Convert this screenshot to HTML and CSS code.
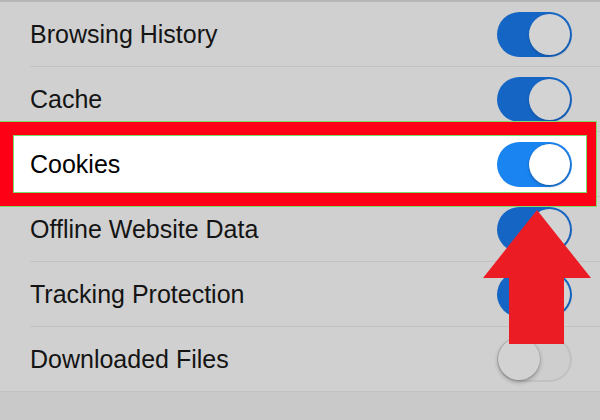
FILE: index.html
```html
<!DOCTYPE html>
<html lang="en">
<head>
<meta charset="utf-8">
<title>Clear Data</title>
<link rel="stylesheet" href="styles.css">
</head>
<body>
<div class="screen">
  <div class="topline"></div>
  <ul class="list">
    <li class="row"><span class="label">Browsing History</span><span class="toggle on dim"><span class="knob"></span></span></li>
    <li class="row"><span class="label">Cache</span><span class="toggle on dim"><span class="knob"></span></span></li>
    <li class="row highlighted"><span class="label">Cookies</span><span class="toggle on"><span class="knob"></span></span></li>
    <li class="row"><span class="label">Offline Website Data</span><span class="toggle on dim"><span class="knob"></span></span></li>
    <li class="row"><span class="label">Tracking Protection</span><span class="toggle on dim"><span class="knob"></span></span></li>
    <li class="row last"><span class="label">Downloaded Files</span><span class="toggle off"><span class="knob"></span></span></li>
  </ul>
  <div class="frame"></div>
  <svg class="arrow" width="600" height="420" viewBox="0 0 600 420" aria-hidden="true">
    <polygon points="537,210 591,278 564,278 564,344 509,344 509,278 483,278" fill="#ec1c24"/>
  </svg>
</div>
</body>
</html>
```

FILE: styles.css
```css
* { box-sizing: border-box; }
html, body {
  margin: 0;
  padding: 0;
  background: #c9c9c9;
}
.screen {
  position: relative;
  width: 600px;
  height: 420px;
  overflow: hidden;
  background: #c9c9c9;
  font-family: "Liberation Sans", Arial, sans-serif;
}
.topline {
  height: 2px;
  background: #b6b6b6;
}
.list {
  list-style: none;
  margin: 0;
  padding: 0;
  background: #d0d0d0;
}
.row {
  display: flex;
  align-items: center;
  justify-content: space-between;
  height: 65px;
  padding: 0 28px 1px 30px;
  background-image: linear-gradient(#c2c2c2, #c2c2c2);
  background-size: calc(100% - 30px) 1px;
  background-position: 30px 100%;
  background-repeat: no-repeat;
}
.row.last {
  background-size: 100% 1px;
  background-position: 0 100%;
}
.label {
  font-size: 25px;
  color: #141414;
  line-height: 1;
}
.highlighted .label,
.highlighted .toggle {
  position: relative;
  z-index: 2;
}
.highlighted .label { color: #000; }

.toggle {
  position: relative;
  display: block;
  width: 75px;
  height: 45px;
  border-radius: 23px;
  flex: none;
}
.toggle .knob {
  position: absolute;
  top: 2px;
  width: 41px;
  height: 41px;
  border-radius: 50%;
}
.toggle.on { background: #1a84f2; }
.toggle.on .knob {
  right: 2px;
  background: #ffffff;
  box-shadow: 0 2px 3px rgba(0, 0, 0, 0.18);
}
.toggle.on.dim { background: #1565c4; }
.toggle.on.dim .knob {
  background: #d3d3d3;
  box-shadow: 0 2px 3px rgba(0, 0, 0, 0.15);
}
.highlighted .toggle.on { background: #1a84f0; }
.highlighted .toggle.on .knob { box-shadow: 0 2px 3px rgba(0, 0, 0, 0.2), 0 0 0 0.5px #1a6cc8; }
.toggle.off {
  background: #cecece;
  box-shadow: inset 0 0 0 2px #c1c1c1;
}
.toggle.off .knob {
  left: 1px;
  top: 1px;
  width: 42px;
  height: 42px;
  background: #d2d2d2;
  box-shadow: 0 2px 4px rgba(0, 0, 0, 0.3), 0 0 0 0.5px rgba(0, 0, 0, 0.12);
}

.frame {
  position: absolute;
  z-index: 1;
  left: 0;
  top: 122px;
  width: 596px;
  height: 84px;
  background: #ffffff;
  border: solid #fe0016;
  border-width: 13px 9px 13px 13px;
  box-shadow: 0 0 0 1px #7edc6a, inset 0 0 0 1px #7edc6a;
}
.arrow {
  position: absolute;
  z-index: 3;
  left: 0;
  top: 0;
}
```
